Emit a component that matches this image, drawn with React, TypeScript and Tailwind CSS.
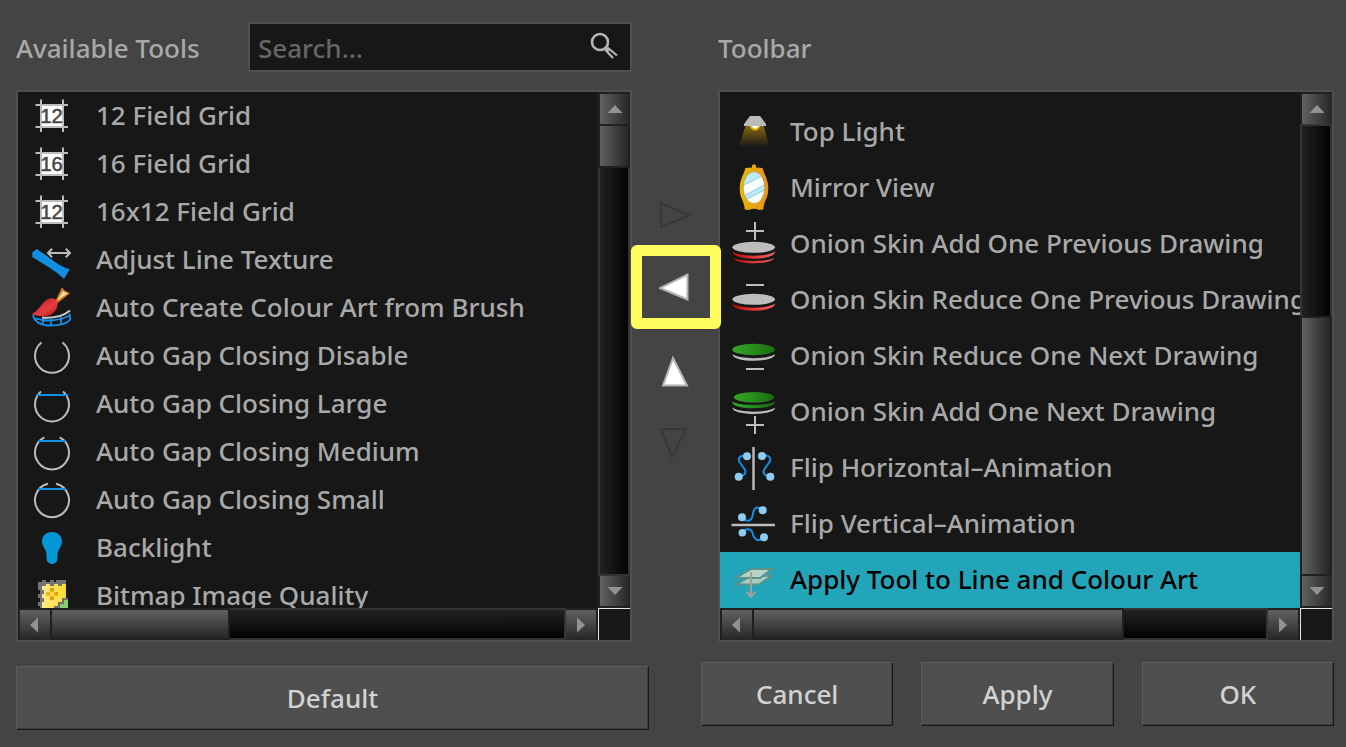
import { useState, type ReactNode } from "react";
import clsx from "clsx";

const LIGHT = "#bdbdbd";
const BLUE = "#1290e6";

interface Tool {
  name: string;
  icon: ReactNode;
}

function Icon({ children }: { children: ReactNode }) {
  return (
    <svg viewBox="0 0 48 48" className="h-12 w-12 shrink-0" fill="none" aria-hidden="true">
      {children}
    </svg>
  );
}

function FieldGridIcon({ label }: { label: string }) {
  return (
    <Icon>
      <rect x="13" y="13" width="22" height="22" fill="#fff" />
      <path d="M13 7.5V40M35 7.5V40M7.5 13H40M7.5 35H40" stroke={LIGHT} strokeWidth="2" />
      <text
        x="23.5"
        y="31"
        textAnchor="middle"
        fontSize="20"
        fontFamily="'Liberation Sans', sans-serif"
        fill="#444"
        stroke="#444"
        strokeWidth="0.5"
      >
        {label}
      </text>
    </Icon>
  );
}

function LineTextureIcon() {
  return (
    <Icon>
      <path
        d="M4.3 16.5 8.7 13Q17 18.5 23 23 32 30.5 41.7 33.3L36 42.7Q30 37 22 32L4.3 21Z"
        fill="#128ee2"
      />
      <path d="M20.5 17H41.5M24 12.8 20 17 24 21.2M37.800 12.8 42 17 37.8 21.2" stroke={LIGHT} strokeWidth="2" />
    </Icon>
  );
}

function ColourArtIcon() {
  return (
    <Icon>
      <defs>
        <linearGradient id="brush-red" x1="0" y1="0" x2="1" y2="1">
          <stop offset="0" stopColor="#c40d12" />
          <stop offset="0.6" stopColor="#e23f42" />
          <stop offset="1" stopColor="#c40d12" />
        </linearGradient>
      </defs>
      <path
        d="M5 31Q7 41 22 41.5 38 41.5 42.3 35.5L41.5 29.5M6 34Q24 40 42 31.5M15 34V40M23 35V41M33 33V39.5"
        stroke={BLUE}
        strokeWidth="1.8"
      />
      <path d="M14 33.5Q32 35 42 26.5" stroke="#c8c8c8" strokeWidth="2" />
      <path d="M27 18 34 3.3 36.5 6.5 42 9.3 29 19.5Z" fill="#cf7f23" />
      <path d="M29 16.5 35 7 39.5 9.5Z" fill="#ffdcae" />
      <path
        d="M3.3 30C12 27 13 17 22 14.5 28 13.5 31 18 29 23.5 25 33 15 34 3.3 30Z"
        fill="url(#brush-red)"
      />
    </Icon>
  );
}

// The wider the gap setting, the further apart the two open ends of the circle.
function GapIcon({ size }: { size: "none" | "large" | "medium" | "small" }) {
  const arcs = {
    none: "M13.5 10.5A17 17 0 1 0 34.5 10.5",
    large: "M13 11.5A17 17 0 1 0 35 11.5",
    medium: "M16.3 9.3A17 17 0 1 0 31.7 9.3",
    small: "M20 7.7A17 17 0 1 0 28 7.7",
  };
  return (
    <Icon>
      <path d={arcs[size]} stroke={LIGHT} strokeWidth="2" />
      {size === "large" && <path d="M8 15H40" stroke={BLUE} strokeWidth="2" />}
      {(size === "medium" || size === "small") && <path d="M10 13H38" stroke={BLUE} strokeWidth="2" />}
    </Icon>
  );
}

function BacklightIcon() {
  return (
    <Icon>
      <path
        d="M24 8C30 8 34 12.3 34 17.5 34 23.5 28.5 25 29.5 34 29.5 37.5 27 40 24 40 21 40 18.5 37.5 18.5 34 19.5 25 14 23.5 14 17.5 14 12.3 18 8 24 8Z"
        fill="#0397d7"
      />
    </Icon>
  );
}

function BitmapIcon() {
  return (
    <Icon>
      <defs>
        <linearGradient id="bitmap-yellow">
          <stop offset="0" stopColor="#ffe98a" />
          <stop offset="1" stopColor="#f8dc28" />
        </linearGradient>
      </defs>
      <path
        d="M10 10H14V8H18V10H22V8H26V10H28V8H38V14H36V38H12V34H10V30H12V26H10V22H12V18H10Z"
        fill="#747474"
      />
      <path
        d="M14 14H18V12H22V14H26V12H30V14H34V12H38V26H34V30H30V34H26V38H14V30H16V26H14V22H16V18H14Z"
        fill="url(#bitmap-yellow)"
      />
      <path d="M22 16H26V20H30V24H26V28H22V24H18V20H22Z" fill="#f3b51f" />
      <path d="M22 20H26V24H22Z" fill="#ffd94a" />
      <path d="M22 16H26V19H22ZM22 25H26V28H22ZM27 20H30V23H27Z" fill="#e39a10" />
      <path d="M36 26H40V38H26V34H30V30H34V26Z" fill="#707070" />
      <path d="M36 28H40V38H28V36H32V32H36Z" fill="#86cf6c" />
    </Icon>
  );
}

function TopLightIcon() {
  return (
    <Icon>
      <defs>
        <linearGradient id="light-beam" x1="0" y1="0" x2="0" y2="1">
          <stop offset="0" stopColor="#8a6c10" />
          <stop offset="1" stopColor="#8a6c10" stopOpacity="0" />
        </linearGradient>
      </defs>
      <path d="M16 17H33.5L39.5 39H8.5Z" fill="url(#light-beam)" />
      <circle cx="25" cy="17.5" r="5" fill="#e8b40c" />
      <path d="M21.5 18Q25 23 29 18Z" fill="#fff" />
      <path d="M20 8H30L36 16V18H14V16Z" fill="#bcbcbc" />
    </Icon>
  );
}

function MirrorIcon() {
  return (
    <Icon>
      <defs>
        <linearGradient id="mirror-frame">
          <stop offset="0" stopColor="#e9b800" />
          <stop offset="1" stopColor="#e8921e" />
        </linearGradient>
        <clipPath id="mirror-glass">
          <ellipse cx="24" cy="23.7" rx="10.8" ry="16" />
        </clipPath>
      </defs>
      <path
        d="M22 3.5V1.5Q24-1 26 1.5V3.5L32.5 4Q34 9 36 13 40 23 37 33 33.5 40 33.3 45.5L29 46Q24 43.5 19 46L14.7 45.5Q14.5 40 11 33 8 23 12 13 14 9 15.5 4Z"
        fill="url(#mirror-frame)"
      />
      <g clipPath="url(#mirror-glass)">
        <path d="M10 0H38V48H10Z" fill="#f6fdff" />
        <path d="M10 0H38V9L10 23ZM10 34 38 19V24L10 39Z" fill="#b9ecf8" />
        <path d="M10 23 38 9M10 34 38 19M10 39 38 24" stroke="#7fa6ad" strokeWidth="0.6" />
      </g>
      <ellipse cx="24" cy="23.7" rx="10.8" ry="16" stroke="#a78428" strokeWidth="0.6" />
    </Icon>
  );
}

function OnionDefs() {
  return (
    <defs>
      <linearGradient id="onion-red">
        <stop offset="0" stopColor="#c40808" />
        <stop offset="1" stopColor="#fb6464" />
      </linearGradient>
      <linearGradient id="onion-green">
        <stop offset="0" stopColor="#33a827" />
        <stop offset="1" stopColor="#1a6e10" />
      </linearGradient>
    </defs>
  );
}

function OnionPreviousAddIcon() {
  return (
    <Icon>
      <OnionDefs />
      <path d="M16 11H34M25 2V20" stroke={LIGHT} strokeWidth="2" />
      <ellipse cx="23.7" cy="27.3" rx="21.3" ry="5.5" fill={LIGHT} />
      <path d="M2.5 31.5C8 37 39 37 45 31.5 46 41 2 41 2.5 31.5Z" fill="url(#onion-red)" />
      <path d="M3.5 38C10 42 38 42 44 38 42 45 5 45 3.5 38Z" fill="url(#onion-red)" />
    </Icon>
  );
}

function OnionPreviousReduceIcon() {
  return (
    <Icon>
      <OnionDefs />
      <path d="M16 9H34" stroke={LIGHT} strokeWidth="2" />
      <ellipse cx="23.7" cy="23.3" rx="21.3" ry="5.5" fill={LIGHT} />
      <path d="M2.5 27.5C8 33 39 33 45 27.5 46 37 2 37 2.5 27.5Z" fill="url(#onion-red)" />
    </Icon>
  );
}

function OnionNextReduceIcon() {
  return (
    <Icon>
      <OnionDefs />
      <ellipse cx="23.7" cy="17.5" rx="21.3" ry="5.7" fill="url(#onion-green)" />
      <path d="M2.5 22C8 27.5 39 27.5 45 22 46 31 2 31 2.5 22Z" fill={LIGHT} />
      <path d="M16 37H34" stroke={LIGHT} strokeWidth="2" />
    </Icon>
  );
}

function OnionNextAddIcon() {
  return (
    <Icon>
      <OnionDefs />
      <ellipse cx="24" cy="9.3" rx="20" ry="5.3" fill="url(#onion-green)" />
      <path d="M2.3 13.5C8 18 39 18 45 13.5 46 22.5 1 22.5 2.3 13.5Z" fill="url(#onion-green)" />
      <path d="M2.5 19.5C8 25 39 25 45 19.5 46 28 2 28 2.5 19.5Z" fill={LIGHT} />
      <path d="M16 37H34M25 28V46" stroke={LIGHT} strokeWidth="2" />
    </Icon>
  );
}

function FlipHorizontalIcon() {
  return (
    <Icon>
      <path d="M23.5 3V46" stroke={LIGHT} strokeWidth="2.4" />
      <path
        d="M17 12.3C9 10 7 15 10.5 19.5L14.5 25Q18 31 8.7 32.7M32 12C40 10 42 15 38.5 19.5L34.5 25Q31 31 40.3 32.7"
        stroke={BLUE}
        strokeWidth="2"
      />
      <g fill="#8fcdf0">
        <circle cx="17" cy="12.3" r="4" />
        <circle cx="8.7" cy="32.7" r="4" />
        <circle cx="32" cy="12" r="4" />
        <circle cx="40.3" cy="32.7" r="4" />
      </g>
    </Icon>
  );
}

function FlipVerticalIcon() {
  return (
    <Icon>
      <path d="M1.5 25H45" stroke={LIGHT} strokeWidth="2.4" />
      <path
        d="M12 17.3C16 22 21 22 22.5 16 23.500 9 26 4 32.7 10.3M12.3 32.7C15 28 21 28 22.5 33 24 39 28 43 34 37.3"
        stroke={BLUE}
        strokeWidth="2"
      />
      <g fill="#8fcdf0">
        <circle cx="12" cy="17.3" r="4" />
        <circle cx="32.7" cy="10.3" r="4" />
        <circle cx="12.3" cy="32.7" r="3.8" />
        <circle cx="34" cy="37.3" r="4" />
      </g>
    </Icon>
  );
}

function ApplyLineColourIcon() {
  return (
    <Icon>
      <path d="M6 28.5 20 20.5 42 19.5 29 28.5Z" fill="#a5cdc3" stroke="#5b928c" strokeWidth="2" />
      <path d="M6 22 21 13H42L30 22Z" fill="#b7d3c8" stroke="#5b928c" strokeWidth="2" />
      <path d="M21 16V40.5M16.500 35.5 21 41 25.5 35.5" stroke="#a3a096" strokeWidth="2" />
    </Icon>
  );
}

const availableTools: Tool[] = [
  { name: "12 Field Grid", icon: <FieldGridIcon label="12" /> },
  { name: "16 Field Grid", icon: <FieldGridIcon label="16" /> },
  { name: "16x12 Field Grid", icon: <FieldGridIcon label="12" /> },
  { name: "Adjust Line Texture", icon: <LineTextureIcon /> },
  { name: "Auto Create Colour Art from Brush", icon: <ColourArtIcon /> },
  { name: "Auto Gap Closing Disable", icon: <GapIcon size="none" /> },
  { name: "Auto Gap Closing Large", icon: <GapIcon size="large" /> },
  { name: "Auto Gap Closing Medium", icon: <GapIcon size="medium" /> },
  { name: "Auto Gap Closing Small", icon: <GapIcon size="small" /> },
  { name: "Backlight", icon: <BacklightIcon /> },
  { name: "Bitmap Image Quality", icon: <BitmapIcon /> },
];

const toolbarTools: Tool[] = [
  { name: "Top Light", icon: <TopLightIcon /> },
  { name: "Mirror View", icon: <MirrorIcon /> },
  { name: "Onion Skin Add One Previous Drawing", icon: <OnionPreviousAddIcon /> },
  { name: "Onion Skin Reduce One Previous Drawing", icon: <OnionPreviousReduceIcon /> },
  { name: "Onion Skin Reduce One Next Drawing", icon: <OnionNextReduceIcon /> },
  { name: "Onion Skin Add One Next Drawing", icon: <OnionNextAddIcon /> },
  { name: "Flip Horizontal–Animation", icon: <FlipHorizontalIcon /> },
  { name: "Flip Vertical–Animation", icon: <FlipVerticalIcon /> },
  { name: "Apply Tool to Line and Colour Art", icon: <ApplyLineColourIcon /> },
];

// Shares of the track before, under and after the thumb.
interface ScrollPosition {
  before: number;
  thumb: number;
  after: number;
}

const arrowPaths = {
  up: "M8 4 15.5 12H0.5Z",
  down: "M8 12 0.5 4H15.5Z",
  left: "M3 8 11 0.5V15.5Z",
  right: "M12 8 4 0.5V15.5Z",
};

function ScrollArrow({ direction }: { direction: keyof typeof arrowPaths }) {
  const vertical = direction === "up" || direction === "down";
  return (
    <button
      aria-label={`Scroll ${direction}`}
      className={clsx(
        "flex h-8 w-8 shrink-0 items-center justify-center border-[#202020] from-[#616161] to-[#262626]",
        vertical ? "border-l-2 bg-linear-to-r/srgb" : "border-t-2 bg-linear-to-b/srgb",
        direction === "up" && "border-t-2",
        direction === "down" && "border-b-2",
        direction === "left" && "border-l-2",
        direction === "right" && "border-r-2",
      )}
    >
      <svg viewBox="0 0 16 16" className="h-4 w-4" aria-hidden="true">
        <path d={arrowPaths[direction]} fill="#929292" />
      </svg>
    </button>
  );
}

function VerticalScrollbar({ before, thumb, after }: ScrollPosition) {
  return (
    <div className="flex w-8 flex-col">
      <ScrollArrow direction="up" />
      {before > 0 && (
        <div
          className="basis-0 border-x-2 border-t-2 border-[#333] bg-linear-to-r/srgb from-[#222] to-[#020202]"
          style={{ flexGrow: before }}
        />
      )}
      <div
        className="basis-0 border-2 border-[#202020] bg-linear-to-r/srgb from-[#616161] to-[#262626]"
        style={{ flexGrow: thumb }}
      />
      {after > 0 && (
        <div
          className="basis-0 border-x-2 border-b-2 border-[#333] bg-linear-to-r/srgb from-[#222] to-[#020202]"
          style={{ flexGrow: after }}
        />
      )}
      <ScrollArrow direction="down" />
    </div>
  );
}

function HorizontalScrollbar({ thumb, after }: Omit<ScrollPosition, "before">) {
  return (
    <div className="flex h-8">
      <ScrollArrow direction="left" />
      <div
        className="basis-0 border-2 border-[#202020] bg-linear-to-b/srgb from-[#616161] to-[#262626]"
        style={{ flexGrow: thumb }}
      />
      <div
        className="basis-0 border-y-2 border-r-2 border-[#333] bg-linear-to-b/srgb from-[#222] to-[#020202]"
        style={{ flexGrow: after }}
      />
      <ScrollArrow direction="right" />
    </div>
  );
}

interface ToolListProps {
  label: string;
  tools: Tool[];
  selected?: string;
  onSelect: (name: string) => void;
  large?: boolean;
  vertical: ScrollPosition;
  horizontal: Omit<ScrollPosition, "before">;
}

function ToolList({ label, tools, selected, onSelect, large, vertical, horizontal }: ToolListProps) {
  return (
    <section
      aria-label={label}
      className="grid min-h-0 grid-cols-[minmax(0,1fr)_32px] grid-rows-[minmax(0,1fr)_32px] border-2 border-[#4f4f4f] bg-[#171717]"
    >
      <ul className={clsx("flex flex-col overflow-hidden", large && "justify-end")}>
        {tools.map((tool) => (
          <li key={tool.name} className="shrink-0">
            <button
              onClick={() => onSelect(tool.name)}
              className={clsx(
                "flex w-full items-center overflow-hidden pl-2.5 whitespace-nowrap",
                large ? "h-14 gap-3" : "h-12 gap-5",
                tool.name === selected ? "bg-[#22a5b9] text-black" : "text-[#a9a9a9]",
              )}
            >
              {tool.icon}
              <span className="pb-0.5">{tool.name}</span>
            </button>
          </li>
        ))}
      </ul>
      <VerticalScrollbar {...vertical} />
      <HorizontalScrollbar {...horizontal} />
      <div className="border-t border-l border-[#e4e4e4]" />
    </section>
  );
}

function MoveButtons() {
  return (
    <div className="flex flex-col pt-[95px]">
      <button aria-label="Add to toolbar" disabled className="flex h-[60px] items-center justify-center">
        <svg viewBox="0 0 32 32" className="h-8 w-8" fill="none" aria-hidden="true">
          <path d="M2 4V28L30 16.5Z" stroke="#383838" strokeWidth="2" />
        </svg>
      </button>
      <button aria-label="Remove from toolbar" className="relative flex h-[84px] items-center justify-center">
        <svg viewBox="0 0 32 32" className="h-8 w-8" aria-hidden="true">
          <path d="M28.5 3.5V28.5L1 17Z" fill="#fff" stroke="#b4b4b4" strokeWidth="2" />
        </svg>
        <span className="absolute inset-y-0 -right-[3px] -left-px z-10 rounded-md border-[11px] border-[#fffc5e]" />
      </button>
      <button aria-label="Move up" className="flex h-[84px] items-center justify-center">
        <svg viewBox="0 0 32 32" className="h-8 w-8" aria-hidden="true">
          <path d="M14 3 28 30.5H4Z" fill="#fff" stroke="#b4b4b4" strokeWidth="2" />
        </svg>
      </button>
      <button aria-label="Move down" disabled className="flex h-[60px] items-center justify-center">
        <svg viewBox="0 0 32 32" className="h-8 w-8" fill="none" aria-hidden="true">
          <path d="M2 2H27L13 30Z" stroke="#383838" strokeWidth="2" />
        </svg>
      </button>
    </div>
  );
}

function DialogButton({ children, className }: { children: ReactNode; className?: string }) {
  return (
    <button
      className={clsx(
        "h-16 border border-t-[#5c5c5c] border-r-[#1a1a1a] border-b-[#1a1a1a] border-l-[#5c5c5c] bg-[#4f4f4f] text-[#d2d2d2] shadow-[inset_-1px_-1px_0_#3c3c3c]",
        className,
      )}
    >
      {children}
    </button>
  );
}

export default function App() {
  const [search, setSearch] = useState("");
  const [available, setAvailable] = useState<string>();
  const [active, setActive] = useState("Apply Tool to Line and Colour Art");

  return (
    <div className="flex h-screen flex-col bg-[#444] pt-[22px] pr-3 pb-[17px] pl-4 font-['Noto_Sans',sans-serif] text-[26px] leading-8 font-medium text-[#a9a9a9]">
      <main className="grid min-h-0 flex-1 grid-cols-[minmax(0,1fr)_86px_minmax(0,1fr)] grid-rows-[50px_minmax(0,1fr)] gap-y-[18px]">
        <div className="flex items-center justify-between">
          <label htmlFor="tool-search" className="pt-0.5">
            Available Tools
          </label>
          <div className="flex h-full w-96 items-center border-2 border-[#4f4f4f] bg-[#171717] pr-2.5 pl-2">
            <input
              id="tool-search"
              value={search}
              onChange={(e) => setSearch(e.target.value)}
              placeholder="Search..."
              className="min-w-0 flex-1 bg-transparent pt-0.5 outline-none placeholder:text-[#666]"
            />
            <svg viewBox="0 0 32 32" className="h-8 w-8" fill="none" stroke="#b5b5b5" aria-hidden="true">
              <circle cx="12" cy="11" r="8" strokeWidth="2.6" />
              <path d="M19.5 16.5 29 24.5M17 18.5 25 27M18 17 21 20" strokeWidth="2.200" />
            </svg>
          </div>
        </div>
        <div />
        <h2 className="self-center pt-0.5">Toolbar</h2>

        <ToolList
          label="Available Tools"
          tools={availableTools}
          selected={available}
          onSelect={setAvailable}
          vertical={{ before: 0, thumb: 40, after: 406 }}
          horizontal={{ thumb: 176, after: 334 }}
        />
        <MoveButtons />
        <ToolList
          label="Toolbar"
          tools={toolbarTools}
          selected={active}
          onSelect={setActive}
          large
          vertical={{ before: 190, thumb: 256, after: 0 }}
          horizontal={{ thumb: 368, after: 142 }}
        />
      </main>

      <footer className="mt-5 grid grid-cols-2 gap-[52px]">
        <DialogButton className="mt-1">Default</DialogButton>
        <div className="grid grid-cols-3 gap-7">
          <DialogButton>Cancel</DialogButton>
          <DialogButton>Apply</DialogButton>
          <DialogButton>OK</DialogButton>
        </div>
      </footer>
    </div>
  );
}
